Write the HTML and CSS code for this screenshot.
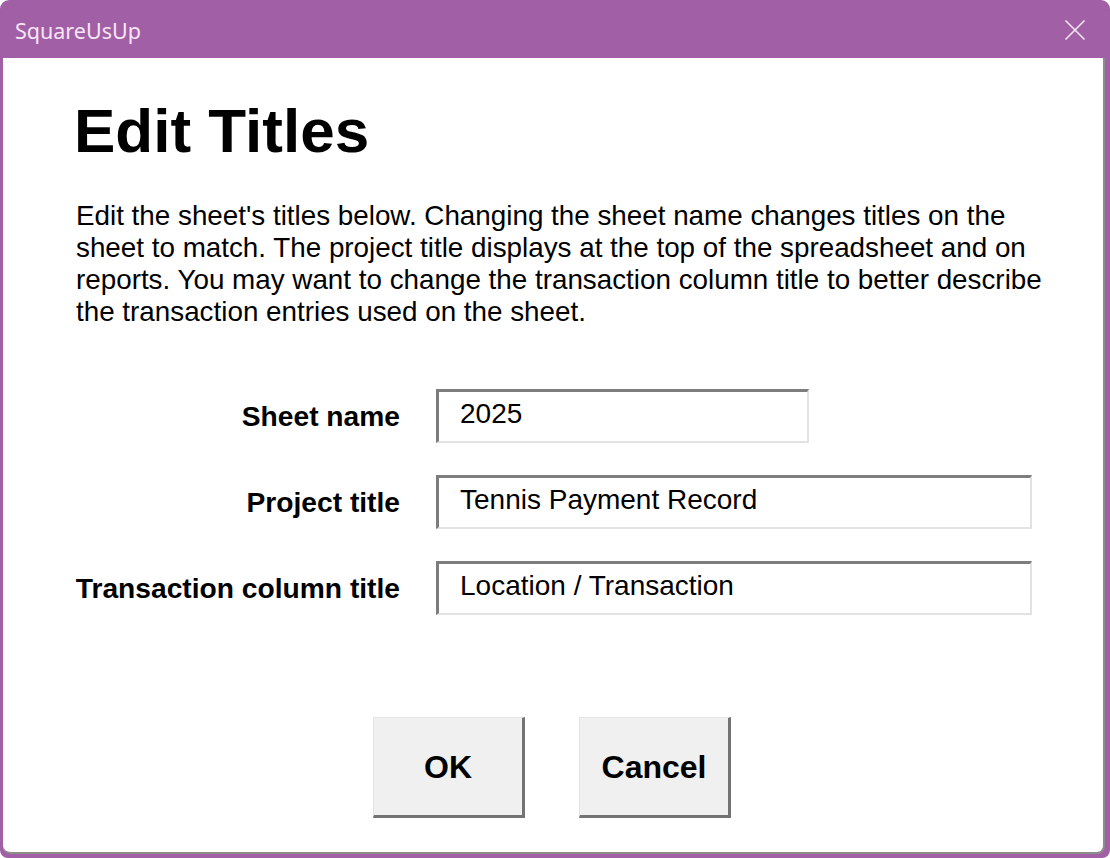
FILE: index.html
```html
<!DOCTYPE html>
<html>
<head>
<meta charset="utf-8">
<link rel="stylesheet" href="styles.css">
<title>SquareUsUp</title>
</head>
<body>
<div class="window">
  <div class="titlebar">
    <span class="app-name">SquareUsUp</span>
    <svg class="close" width="22" height="22" viewBox="0 0 22 22">
      <path d="M1.5 1.5 L20.5 20.5 M20.5 1.5 L1.5 20.5" stroke="#f6e6f6" stroke-width="1.6" fill="none"/>
    </svg>
  </div>
  <div class="client">
    <h1 class="heading">Edit Titles</h1>
    <p class="intro">Edit the sheet's titles below. Changing the sheet name changes titles on the sheet to match. The project title displays at the top of the spreadsheet and on reports. You may want to change the transaction column title to better describe the transaction entries used on the sheet.</p>
    <div class="form">
      <label class="label">Sheet name</label>
      <div class="field field-short">2025</div>
      <label class="label">Project title</label>
      <div class="field">Tennis Payment Record</div>
      <label class="label">Transaction column title</label>
      <div class="field">Location / Transaction</div>
    </div>
    <div class="buttons">
      <div class="btn">OK</div>
      <div class="btn">Cancel</div>
    </div>
  </div>
</div>
</body>
</html>
```

FILE: styles.css
```css
html, body {
  margin: 0;
  padding: 0;
  background: #ffffff;
}

.window {
  width: 1110px;
  height: 858px;
  box-sizing: border-box;
  background: #a15fa6;
  border-radius: 9px 9px 8px 8px;
  display: flex;
  flex-direction: column;
  font-family: "Liberation Sans", Arial, sans-serif;
  color: #000;
}

.titlebar {
  height: 58px;
  flex: none;
  display: flex;
  align-items: center;
  justify-content: space-between;
  padding: 0 24px 0 15px;
}

.app-name {
  font-family: "Noto Sans", "Open Sans", sans-serif;
  font-size: 21.5px;
  color: #f7e6f6;
  margin-top: 3px;
}

.close {
  display: block;
  margin-top: 1px;
}

.client {
  flex: 1;
  margin: 0 5px 4px 3px;
  background: #ffffff;
  border-right: 2px solid #8c8c8c;
  border-bottom: 2px solid #8c8c8c;
  border-radius: 0 0 8px 8px;
  padding: 37px 0 0 73px;
  display: flex;
  flex-direction: column;
}

.heading {
  margin: 0 0 0 -2px;
  font-size: 62px;
  line-height: 72px;
  font-weight: bold;
}

.intro {
  margin: 33px 0 0;
  width: 985px;
  font-size: 27.8px;
  line-height: 32px;
}

.form {
  margin-top: 61px;
  display: grid;
  grid-template-columns: 324px auto;
  column-gap: 36px;
  row-gap: 32px;
  justify-content: start;
  align-items: center;
}

.label {
  text-align: right;
  white-space: nowrap;
  font-weight: bold;
  font-size: 28.2px;
  margin-left: -4px;
}

.field {
  width: 596px;
  height: 54px;
  box-sizing: border-box;
  border-top: 3px solid #7d7d7d;
  border-left: 3px solid #7d7d7d;
  border-right: 2px solid #e2e2e2;
  border-bottom: 2px solid #e2e2e2;
  padding: 0 0 6px 21px;
  display: flex;
  align-items: center;
  font-size: 28px;
}

.field-short {
  width: 373px;
}

.buttons {
  margin: 102px 0 0 -73px;
  display: flex;
  justify-content: center;
  gap: 54px;
  padding-right: 2px;
}

.btn {
  width: 152px;
  height: 101px;
  box-sizing: border-box;
  background: #f0f0f0;
  border-top: 1px solid #e4e4e4;
  border-left: 1px solid #e4e4e4;
  border-right: 3px solid #737373;
  border-bottom: 3px solid #737373;
  display: flex;
  align-items: center;
  justify-content: center;
  font-weight: bold;
  font-size: 32px;
  padding-top: 2px;
}
```
